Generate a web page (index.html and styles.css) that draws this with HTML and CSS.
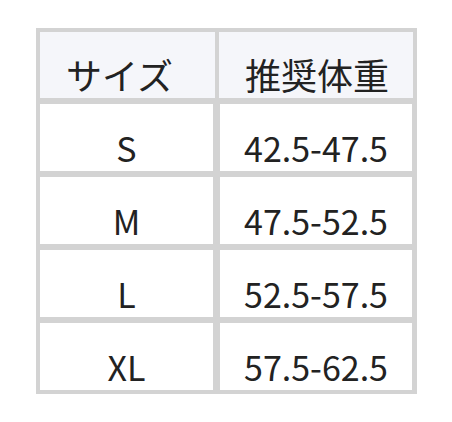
FILE: index.html
```html
<!DOCTYPE html>
<html lang="ja">
<head>
<meta charset="utf-8">
<link rel="stylesheet" href="styles.css">
</head>
<body>
<div class="size-table">
  <div class="row head">
    <div class="cell">サイズ</div>
    <div class="cell">推奨体重</div>
  </div>
  <div class="row body-row">
    <div class="cell">S</div>
    <div class="cell">42.5-47.5</div>
  </div>
  <div class="row body-row">
    <div class="cell">M</div>
    <div class="cell">47.5-52.5</div>
  </div>
  <div class="row body-row">
    <div class="cell">L</div>
    <div class="cell">52.5-57.5</div>
  </div>
  <div class="row body-row">
    <div class="cell">XL</div>
    <div class="cell">57.5-62.5</div>
  </div>
</div>
</body>
</html>
```
FILE: styles.css
```css
html, body {
  margin: 0;
  padding: 0;
  background: #ffffff;
}
body {
  padding: 28px 0 0 36px;
  font-family: "Noto Sans CJK JP", "Noto Sans", sans-serif;
  color: #222222;
}
.size-table {
  width: 381px;
  box-sizing: border-box;
  background: #d3d3d3;
  padding: 4px 4px 4px 4px;
  display: flex;
  flex-direction: column;
  gap: 6px;
}
.row {
  display: grid;
}
.head {
  grid-template-columns: 175px 194px;
  column-gap: 4px;
  height: 66px;
}
.head .cell {
  background: #f5f6fa;
  text-align: left;
  padding: 19px 0 0 26px;
  font-size: 36px;
  line-height: 47px;
}
.body-row {
  grid-template-columns: 173px 192px;
  column-gap: 7px;
  height: 67px;
}
.body-row .cell {
  background: #ffffff;
  text-align: center;
  padding-top: 20px;
  font-size: 34px;
  line-height: 47px;
}
.cell {
  box-sizing: border-box;
  white-space: nowrap;
}
```
